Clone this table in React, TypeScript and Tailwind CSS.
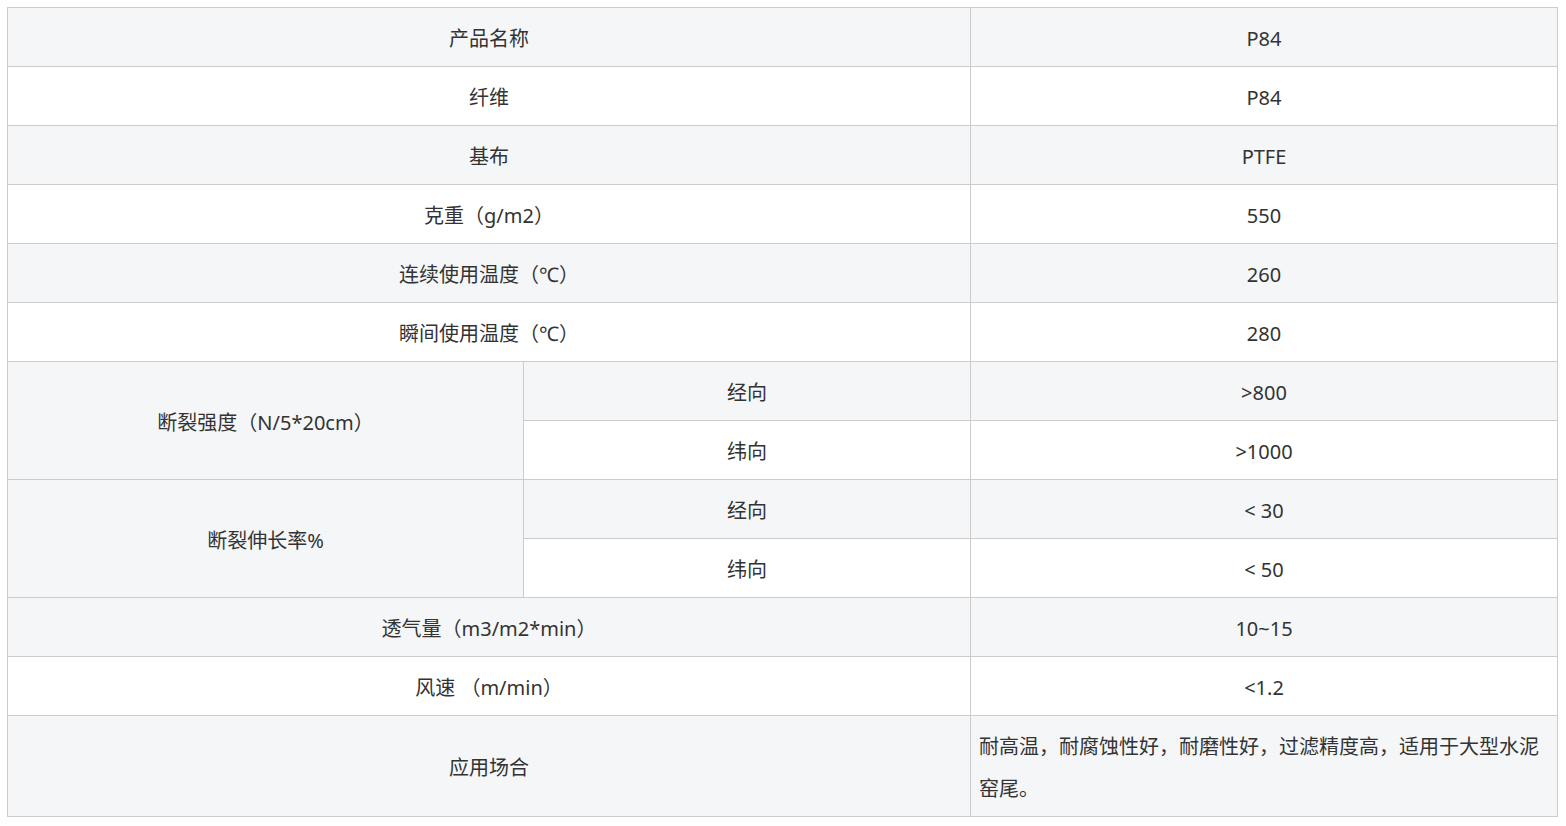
import React from "react";

const gray = "bg-[#f5f6f8]";
const cell = "border border-[#cccccc] text-center px-2 pt-[10px] pb-[6px] leading-[42px] align-middle";

type Row = { a: string; b: string; g: boolean };

const simple1: Row[] = [
  { a: "产品名称", b: "P84", g: true },
  { a: "纤维", b: "P84", g: false },
  { a: "基布", b: "PTFE", g: true },
  { a: "克重（g/m2）", b: "550", g: false },
  { a: "连续使用温度（℃）", b: "260", g: true },
  { a: "瞬间使用温度（℃）", b: "280", g: false },
];

export default function App() {
  return (
    <div className="bg-white w-[1566px] h-[826px] pt-[7px] pl-[7px]" style={{ fontFamily: '"Noto Sans", "Noto Sans CJK SC", sans-serif' }}>
      <table className="table-fixed border-collapse w-[1550px] text-[20px] text-[#333333]">
        <colgroup>
          <col className="w-[516px]" />
          <col className="w-[447px]" />
          <col className="w-[587px]" />
        </colgroup>
        <tbody>
          {simple1.map((r) => (
            <tr key={r.a} className={r.g ? gray : "bg-white"}>
              <td colSpan={2} className={cell}>{r.a}</td>
              <td className={cell}>{r.b}</td>
            </tr>
          ))}
          <tr className={gray}>
            <td rowSpan={2} className={cell}>断裂强度（N/5*20cm）</td>
            <td className={cell}>经向</td>
            <td className={cell}>&gt;800</td>
          </tr>
          <tr className="bg-white">
            <td className={cell}>纬向</td>
            <td className={cell}>&gt;1000</td>
          </tr>
          <tr className={gray}>
            <td rowSpan={2} className={cell}>断裂伸长率%</td>
            <td className={cell}>经向</td>
            <td className={cell}>&lt; 30</td>
          </tr>
          <tr className="bg-white">
            <td className={cell}>纬向</td>
            <td className={cell}>&lt; 50</td>
          </tr>
          <tr className={gray}>
            <td colSpan={2} className={cell}>透气量（m3/m2*min）</td>
            <td className={cell}>10~15</td>
          </tr>
          <tr className="bg-white">
            <td colSpan={2} className={cell}>风速 （m/min）</td>
            <td className={cell}>&lt;1.2</td>
          </tr>
          <tr className={gray}>
            <td colSpan={2} className={cell}>应用场合</td>
            <td className="border border-[#cccccc] text-left px-2 pt-[10px] pb-[6px] leading-[42px] align-middle">
              耐高温，耐腐蚀性好，耐磨性好，过滤精度高，适用于大型水泥窑尾。
            </td>
          </tr>
        </tbody>
      </table>
    </div>
  );
}
